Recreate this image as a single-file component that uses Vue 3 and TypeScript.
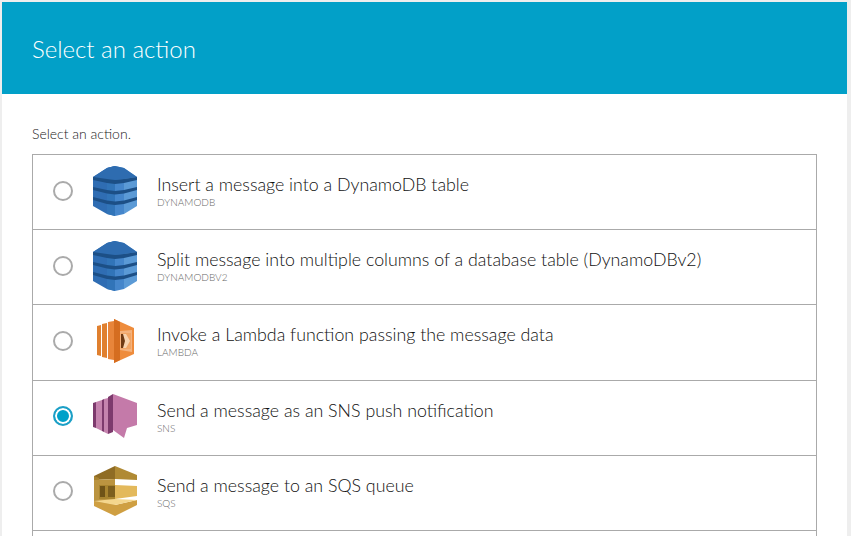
<template>
  <div class="panel">
    <header class="head">
      <h1>Select an action</h1>
    </header>

    <div class="body">
      <p class="hint">Select an action.</p>

      <ul class="actions">
        <li v-for="a in actions" :key="a.code" class="row">
          <span class="radio" :class="{ on: a.code === selected }"></span>

          <span class="icon">
            <svg v-if="a.kind === 'dynamo'" width="44" height="50" viewBox="0 0 44 50">
              <path d="M0 11 14 2 22 0V50L14 48 0 40Z" fill="#2f6db3" />
              <path d="M14 2 22 0V50L14 48Z" fill="#3174b8" />
              <path d="M22 0 31 2V48L22 50Z" fill="#4586cb" />
              <path d="M31 2 44 11V40L31 48Z" fill="#5b9ad6" />
              <path d="M0 11 14 2 22 0 31 2 44 11 31 13 22 14 14 13Z" fill="#2e6cb0" />
              <path d="M0 11 14 13 22 14 31 13 44 11V14L31 17 22 18 14 17 0 14Z" fill="#1c4f86" />
              <path d="M0 21 14 24 22 25 31 24 44 21V24L31 27.500 22 28.500 14 27.500 0 24Z" fill="#1c4f86" />
              <path d="M0 31 14 34.500 22 35.500 31 34.500 44 31V34L31 38 22 39 14 38 0 34Z" fill="#1c4f86" />
            </svg>

            <svg v-else-if="a.kind === 'lambda'" width="37" height="44" viewBox="0 0 37 44">
              <path d="M0 7 4 6V37L0 36Z" fill="#e0802f" />
              <path d="M5 5 10 4V39L5 38Z" fill="#e0802f" />
              <path d="M11 3 17 2V41L11 40Z" fill="#e8853a" />
              <path d="M17 0 37 9V35L17 44Z" fill="#ee8c3c" />
              <path d="M17 0 23 3V41L17 44Z" fill="#d56d20" />
              <path d="M23 12 35 11V33L23 31Z" fill="#f4b27e" />
              <path d="M24 14H34V30H24Z" fill="#f0a566" />
              <path d="M24 15H29V29H24Z" fill="#6f3a14" />
              <path d="M26 15H29L33 22 29 29H26L28 22Z" fill="#f7d3b0" />
            </svg>

            <svg v-else-if="a.kind === 'sns'" width="44" height="44" viewBox="0 0 44 44">
              <path d="M0 9 3 8V34L0 33Z" fill="#7d3a6d" />
              <path d="M3 8 9 6V37L3 34Z" fill="#c583ae" />
              <path d="M9 6 11 5V38L9 37Z" fill="#7d3a6d" />
              <path d="M11 5 15 4V40L11 38Z" fill="#c583ae" />
              <path d="M15 3 20 0V38L15 40Z" fill="#7d3a6d" />
              <path d="M20 0 44 9V31L34 34 31 44 20 36Z" fill="#c47aa9" />
            </svg>

            <svg v-else width="43" height="50" viewBox="0 0 43 50">
              <path d="M21 0 43 9V14L21 13Z" fill="#b08a34" />
              <path d="M21 0 0 10V14L21 13Z" fill="#8f6c24" />
              <path d="M0 10 5 12V38L0 40Z" fill="#a8832f" />
              <path d="M0 14 21 13V19H5V33H21V40L0 40Z" fill="#bb9440" />
              <path d="M5 19H21V33H5Z" fill="#a8842f" />
              <path d="M6 20H11V31H6Z" fill="#6f5317" />
              <path d="M14 20H21V31H14Z" fill="#7d5f1e" />
              <path d="M21 19 43 20V30L21 33Z" fill="#e3b95c" />
              <path d="M0 35 21 39 43 34V39L21 50 0 40Z" fill="#cf9f42" />
              <path d="M0 35 21 33 43 34 21 39Z" fill="#f4d68d" />
            </svg>
          </span>

          <span class="copy">
            <span class="label">{{ a.label }}</span>
            <span class="code">{{ a.code }}</span>
          </span>
        </li>
        <li class="row"></li>
      </ul>
    </div>
  </div>
</template>

<script setup lang="ts">
  type Action = { label: string, code: string, kind: 'dynamo' | 'lambda' | 'sns' | 'sqs' }

  const selected = 'SNS'

  const actions: Action[] = [
    { label: 'Insert a message into a DynamoDB table', code: 'DYNAMODB', kind: 'dynamo' },
    { label: 'Split message into multiple columns of a database table (DynamoDBv2)', code: 'DYNAMODBV2', kind: 'dynamo' },
    { label: 'Invoke a Lambda function passing the message data', code: 'LAMBDA', kind: 'lambda' },
    { label: 'Send a message as an SNS push notification', code: 'SNS', kind: 'sns' },
    { label: 'Send a message to an SQS queue', code: 'SQS', kind: 'sqs' },
  ]
</script>

<style>
html, body {
  margin: 0;
  height: 100%;
  overflow: hidden;
  background: #eeeeee;
}
</style>

<style scoped>
.panel {
  margin: 2px 4px 0 2px;
  background: #ffffff;
  height: 534px;
  overflow: hidden;
  font-family: Lato, "Open Sans", sans-serif;
  color: #444;
}

.head {
  height: 92px;
  background: #02a0c8;
  display: flex;
  align-items: center;
  padding-left: 30px;
}

h1 {
  margin: 0;
  font-size: 24px;
  font-weight: 300;
  color: #ffffff;
}

.body {
  padding: 32px 30px 0;
}

.hint {
  margin: 0 0 12px;
  font-size: 14px;
  line-height: 16px;
  font-weight: 300;
  color: #222;
}

.actions {
  list-style: none;
  margin: 0;
  padding: 0;
  border: 1px solid #aaa;
  border-bottom: none;
}

.row {
  height: 74.2px;
  border-bottom: 1px solid #aaa;
  display: flex;
  align-items: center;
  padding-bottom: 0;
}

.radio {
  width: 20px;
  height: 20px;
  box-sizing: border-box;
  margin: 0 0 3px 20px;
  border: 2px solid #aaa;
  border-radius: 50%;
  flex: none;
}

.radio.on {
  border-color: #1c9fc6;
  background: #00a1c9;
  box-shadow: inset 0 0 0 2px #fff;
}

.icon {
  width: 44px;
  margin: 0 0 3px 20px;
  display: flex;
  justify-content: center;
  flex: none;
}

.copy {
  margin: 0 0 3px 20px;
  display: flex;
  flex-direction: column;
}

.label {
  font-size: 17.8px;
  line-height: 22px;
  font-weight: 300;
  color: #111;
}

.code {
  font-size: 10px;
  line-height: 12px;
  margin-top: 1px;
  font-weight: 300;
  color: #666;
}
</style>
